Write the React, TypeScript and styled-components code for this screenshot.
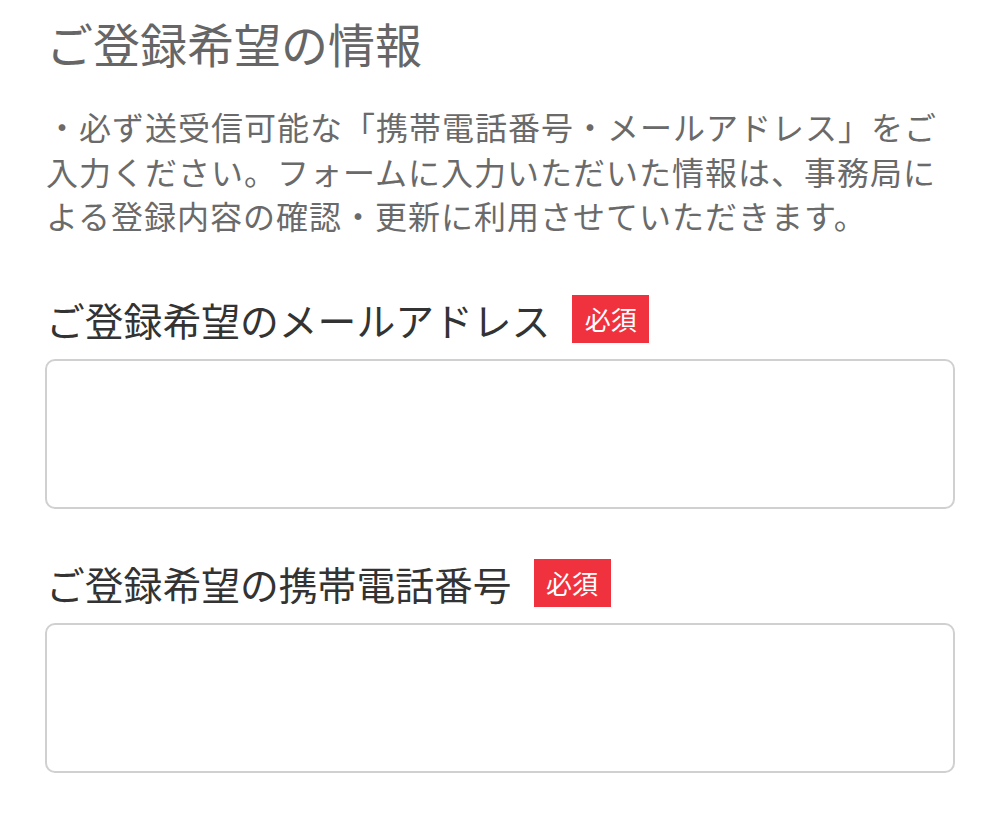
import React from 'react'
import styled, { createGlobalStyle } from 'styled-components'

const GlobalStyle = createGlobalStyle`
  html, body {
    margin: 0;
    padding: 0;
    background: #ffffff;
  }
  body {
    font-family: "Noto Sans CJK JP", "Noto Sans", sans-serif;
  }
`

const Page = styled.div`
  display: flex;
  flex-direction: column;
  padding: 8px 44px 40px 46px;
`

const Title = styled.h2`
  margin: 0;
  font-size: 47px;
  font-weight: 400;
  line-height: 70px;
  color: #666666;
`

const Notice = styled.p`
  margin: 26px 0 0;
  font-size: 32px;
  line-height: 44.6px;
  letter-spacing: 1px;
  color: #6a6a6a;
`

const Field = styled.div`
  display: flex;
  flex-direction: column;
  gap: 16px;
  margin-top: ${({ $first }: { $first?: boolean }) => ($first ? '57px' : '50px')};
`

const LabelRow = styled.label`
  display: flex;
  align-items: center;
  gap: 22px;
  height: 48px;
`

const LabelText = styled.span`
  font-size: 38.8px;
  line-height: 48px;
  color: #333333;
`

const Required = styled.span`
  display: inline-flex;
  align-items: center;
  justify-content: center;
  width: 77px;
  height: 48px;
  background: #f0323e;
  color: #ffffff;
  font-size: 26px;
  line-height: 1;
`

const Input = styled.input`
  box-sizing: border-box;
  width: calc(100% + 1px);
  height: 150px;
  margin-left: -1px;
  border: 2px solid #d0d0d0;
  border-radius: 10px;
  background: #ffffff;
  font: inherit;
  font-size: 32px;
  padding: 0 20px;
  outline: none;
`

export default function App() {
  return (
    <>
      <GlobalStyle />
      <Page>
        <Title>ご登録希望の情報</Title>
        <Notice>
          ・必ず送受信可能な「携帯電話番号・メールアドレス」をご入力ください。フォームに入力いただいた情報は、事務局による登録内容の確認・更新に利用させていただきます。
        </Notice>
        <Field $first>
          <LabelRow>
            <LabelText>ご登録希望のメールアドレス</LabelText>
            <Required>必須</Required>
          </LabelRow>
          <Input type="email" />
        </Field>
        <Field>
          <LabelRow>
            <LabelText>ご登録希望の携帯電話番号</LabelText>
            <Required>必須</Required>
          </LabelRow>
          <Input type="tel" />
        </Field>
      </Page>
    </>
  )
}
